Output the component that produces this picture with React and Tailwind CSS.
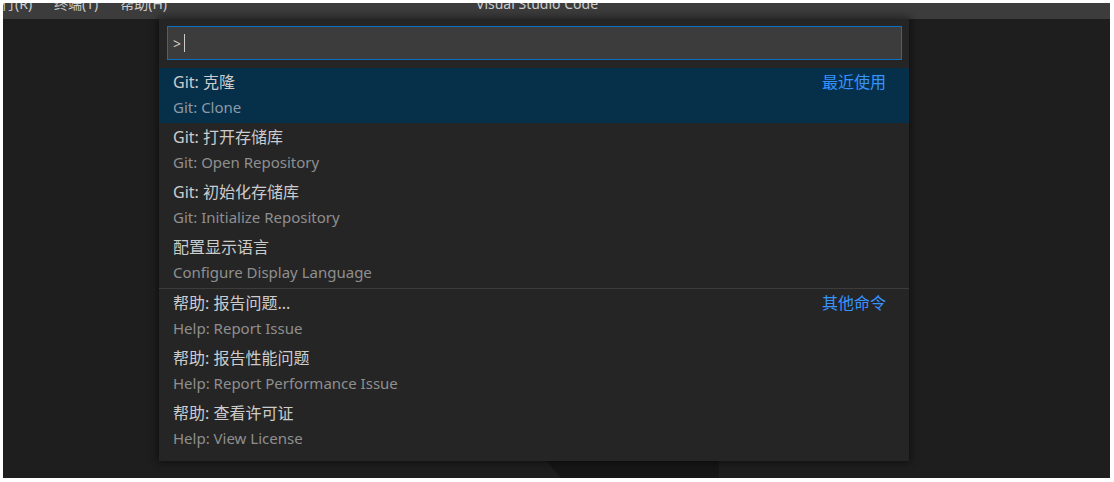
const items = [
  { label: 'Git: 克隆', desc: 'Git: Clone', tag: '最近使用', active: true },
  { label: 'Git: 打开存储库', desc: 'Git: Open Repository' },
  { label: 'Git: 初始化存储库', desc: 'Git: Initialize Repository' },
  { label: '配置显示语言', desc: 'Configure Display Language' },
  { label: '帮助: 报告问题...', desc: 'Help: Report Issue', tag: '其他命令', separator: true },
  { label: '帮助: 报告性能问题', desc: 'Help: Report Performance Issue' },
  { label: '帮助: 查看许可证', desc: 'Help: View License' },
]

const font = "font-['Noto_Sans','Noto_Sans_CJK_SC',sans-serif]"

const TitleBar = () => {
  return <div className="h-[16px] bg-[#3c3c3c] relative overflow-hidden shrink-0">
    <div className="flex -ml-[16px] gap-[22px] -mt-[9px] text-[14px] leading-[20px] text-[#cccccc]">
      <span>运行(R)</span>
      <span>终端(T)</span>
      <span>帮助(H)</span>
    </div>
    <span className="absolute left-[473px] -top-[9px] text-[14px] leading-[20px] text-[#cccccc]">Visual Studio Code</span>
  </div>
}

const Item = ({ item }) => {
  return <>
    {item.separator && <div className="h-px bg-[#3c3c3c]"></div>}
    <div className={`h-[55px] pl-[14px] pr-[23px] pt-[3px] flex ${item.active ? 'bg-[#062f4a]' : ''}`}>
      <div className="grow">
        <div className="text-[16px] leading-[22px] text-[#cccccc]">{item.label}</div>
        <div className={`text-[15px] leading-[22px] mt-[3px] ${item.active ? 'text-[#8d9aa6]' : 'text-[#8f8f8f]'}`}>{item.desc}</div>
      </div>
      {item.tag && <span className="text-[16px] leading-[22px] text-[#3794ff]">{item.tag}</span>}
    </div>
  </>
}

export default function App() {
  return <div className={`w-[1114px] h-[482px] bg-white pt-[3px] pl-[3px] overflow-hidden ${font}`}>
    <div className="w-[1107px] h-[475px] bg-[#1e1e1e] flex flex-col overflow-hidden">
      <TitleBar />
      <div className="relative grow">
        <div className="absolute left-[544px] top-[442px] w-[172px] h-[20px] bg-[#161616] [clip-path:polygon(0_0,100%_0,100%_100%,16px_100%)]"></div>
        <div className="relative ml-[156px] w-[750px] bg-[#252526] shadow-[0_0_8px_2px_rgba(0,0,0,0.45)] pb-[7px]">
          <div className="pt-[7px] pl-[8px] pr-[7px]">
            <div className="h-[34px] bg-[#3c3c3c] border border-[#0e70c0] flex items-center pl-[5px] text-[14px] text-[#cccccc]">
              <span>&gt;</span>
              <span className="w-px h-[18px] bg-[#cccccc] ml-[3px]"></span>
            </div>
          </div>
          <div className="mt-[8px]">
            {items.map((item, i) => <Item key={i} item={item} />)}
          </div>
        </div>
      </div>
    </div>
  </div>
}
